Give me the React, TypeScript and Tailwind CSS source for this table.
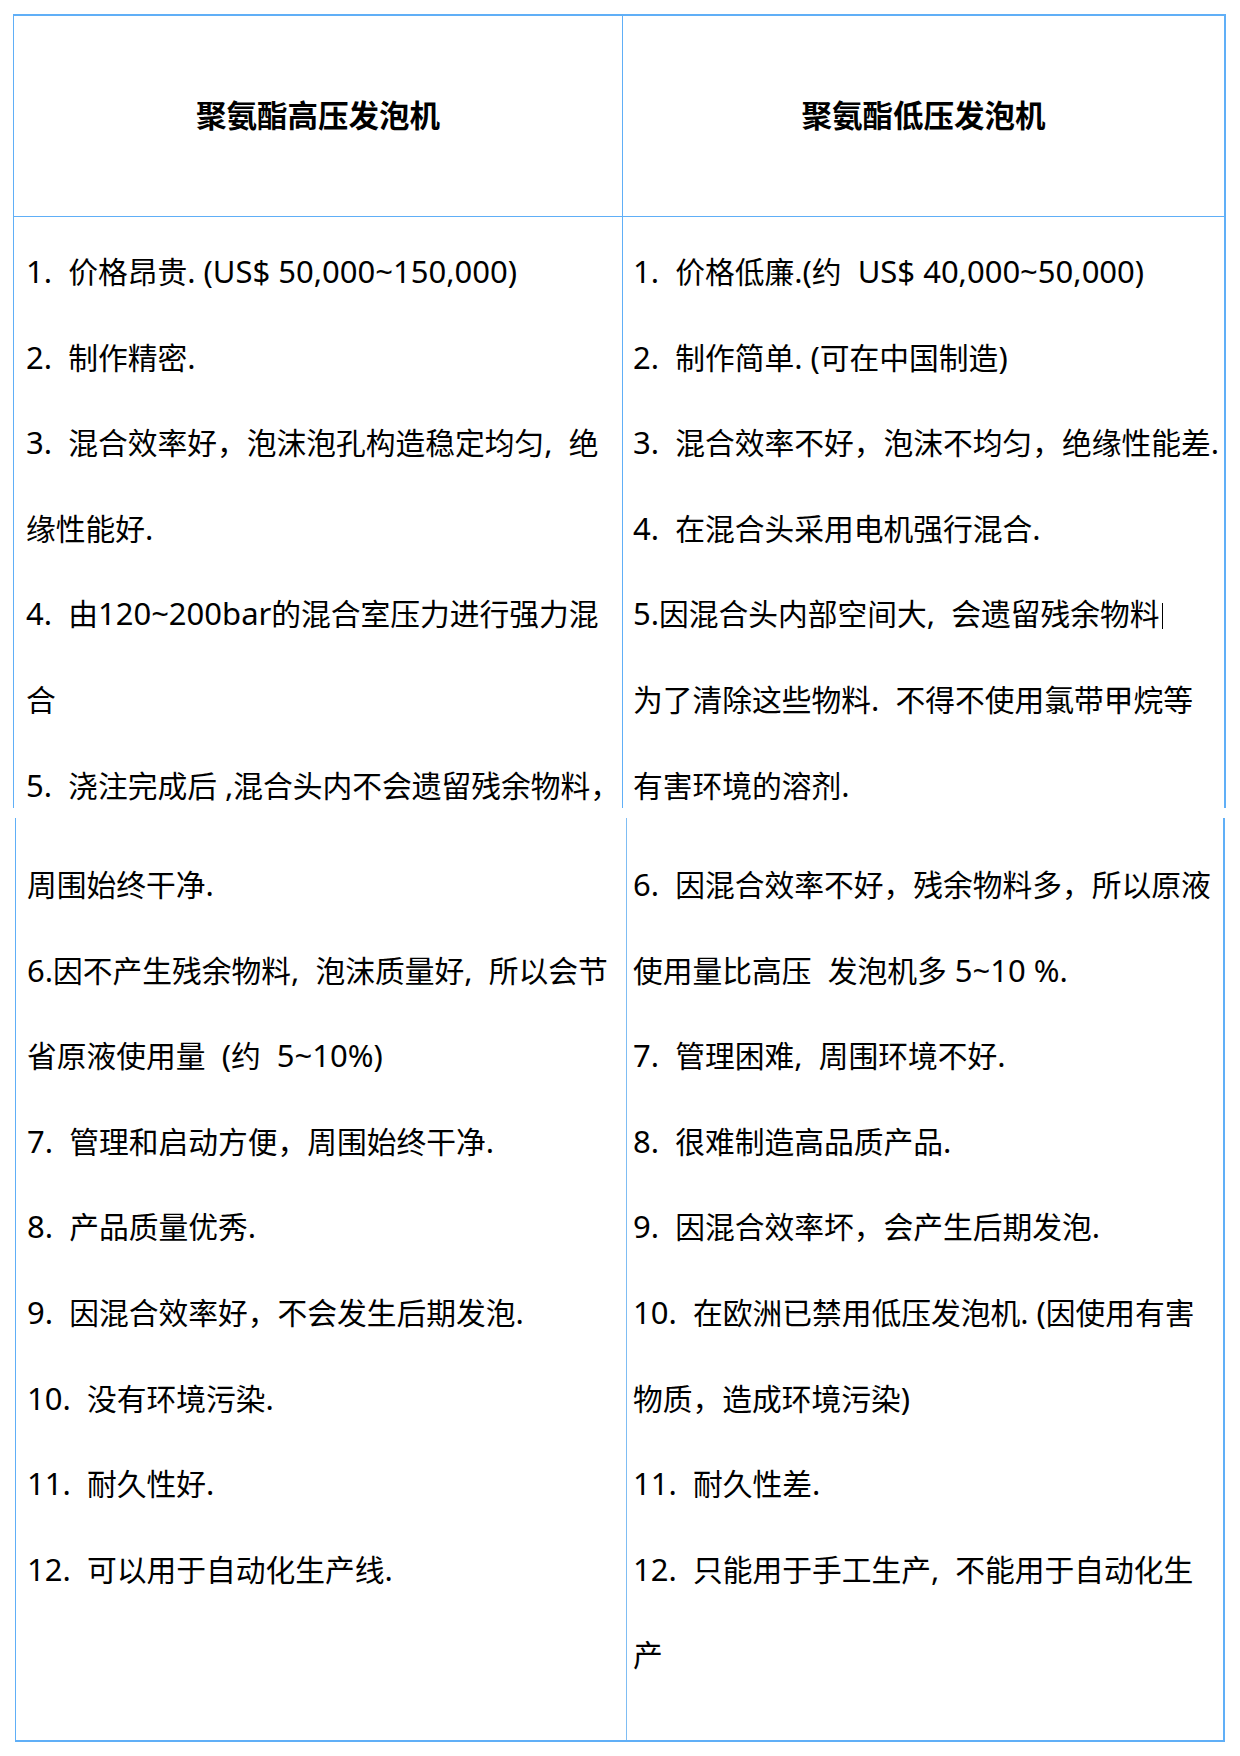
const leftTop = [
  '1.  价格昂贵. (US$ 50,000~150,000)',
  '2.  制作精密.',
  '3.  混合效率好，泡沫泡孔构造稳定均匀,  绝',
  '缘性能好.',
  '4.  由120~200bar的混合室压力进行强力混',
  '合',
  '5.  浇注完成后 ,混合头内不会遗留残余物料，',
];

const rightTop = [
  '1.  价格低廉.(约  US$ 40,000~50,000)',
  '2.  制作简单. (可在中国制造)',
  '3.  混合效率不好，泡沫不均匀，绝缘性能差.',
  '4.  在混合头采用电机强行混合.',
  '5.因混合头内部空间大,  会遗留残余物料',
  '为了清除这些物料.  不得不使用氯带甲烷等',
  '有害环境的溶剂.',
];

const leftBottom = [
  '周围始终干净.',
  '6.因不产生残余物料,  泡沫质量好,  所以会节',
  '省原液使用量  (约  5~10%)',
  '7.  管理和启动方便，周围始终干净.',
  '8.  产品质量优秀.',
  '9.  因混合效率好，不会发生后期发泡.',
  '10.  没有环境污染.',
  '11.  耐久性好.',
  '12.  可以用于自动化生产线.',
];

const rightBottom = [
  '6.  因混合效率不好，残余物料多，所以原液',
  '使用量比高压  发泡机多 5~10 %.',
  '7.  管理困难,  周围环境不好.',
  '8.  很难制造高品质产品.',
  '9.  因混合效率坏，会产生后期发泡.',
  '10.  在欧洲已禁用低压发泡机. (因使用有害',
  '物质，造成环境污染)',
  '11.  耐久性差.',
  '12.  只能用于手工生产,  不能用于自动化生',
  '产',
];

// latin runs are set a little larger, like the original's mixed fonts
function Mixed({ text }: { text: string }) {
  const parts = text.split(/([\x20-\x7e]+)/);
  return (
    <>
      {parts.map((p, i) =>
        /^[\x20-\x7e]+$/.test(p) ? (
          <span key={i} className="text-[31px] leading-[0]">{p}</span>
        ) : (
          <span key={i}>{p}</span>
        )
      )}
    </>
  );
}

function Lines({ items, cursorAt }: { items: string[]; cursorAt?: number }) {
  return (
    <>
      {items.map((t, i) => (
        <div key={i} className="whitespace-pre h-[85.6px] leading-[85.6px]">
          <Mixed text={t} />
          {i === cursorAt && <span className="ml-[2px] inline-block h-[26px] w-px bg-black align-[-4px] leading-[0]" />}
        </div>
      ))}
    </>
  );
}

export default function App() {
  return (
    <div
      className="w-[1240px] h-[1756px] bg-white text-[29.75px] text-black overflow-hidden"
      style={{ fontFamily: '"Noto Sans", "Noto Sans CJK SC", sans-serif' }}
    >
      {/* upper part */}
      <div className="mt-[14px] ml-[13px] w-[1213px] h-[794px] overflow-hidden border-t-2 border-l border-r-2 border-[#60aff7]">
        <div className="grid grid-cols-[609px_1fr]">
          <div className="h-[201px] border-r border-b border-[#60aff7] flex items-center justify-center font-bold text-[30.5px]">
            聚氨酯高压发泡机
          </div>
          <div className="h-[201px] border-b border-[#60aff7] flex items-center justify-center font-bold text-[30.5px]">
            聚氨酯低压发泡机
          </div>
          <div className="h-[600px] border-r border-[#60aff7] pt-[12px] pl-[12px]">
            <Lines items={leftTop} />
          </div>
          <div className="h-[600px] pt-[12px] pl-[10px]">
            <Lines items={rightTop} cursorAt={4} />
          </div>
        </div>
      </div>

      {/* lower part */}
      <div className="mt-[10px] ml-[15px] w-[1210px] h-[924px] border-l border-r-2 border-b-2 border-[#60aff7] grid grid-cols-[611px_1fr]">
        <div className="border-r border-[#7fbdf3] pt-[24px] pl-[11px]">
          <Lines items={leftBottom} />
        </div>
        <div className="pt-[24px] pl-[6px]">
          <Lines items={rightBottom} />
        </div>
      </div>
    </div>
  );
}
